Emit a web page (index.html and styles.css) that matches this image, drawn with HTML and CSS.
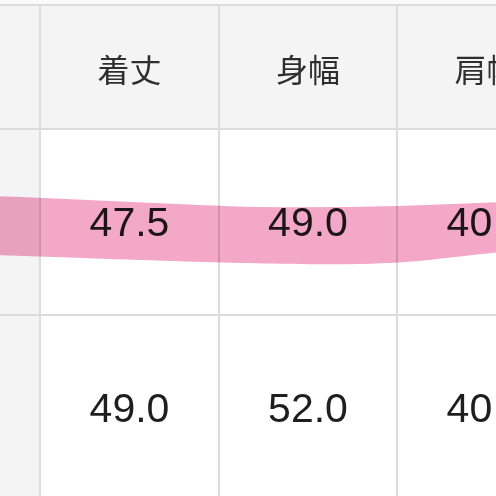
FILE: index.html
```html
<!DOCTYPE html>
<html lang="ja">
<head>
<meta charset="utf-8">
<link rel="stylesheet" href="styles.css">
</head>
<body>
<div class="page">
  <div class="chart">
    <div class="cell side"></div>
    <div class="cell head">着丈</div>
    <div class="cell head">身幅</div>
    <div class="cell head">肩幅</div>

    <div class="cell side"></div>
    <div class="cell num">47.5</div>
    <div class="cell num">49.0</div>
    <div class="cell num">40.0</div>

    <div class="cell side"></div>
    <div class="cell num">49.0</div>
    <div class="cell num">52.0</div>
    <div class="cell num">40.0</div>
  </div>
  <svg class="marker" width="496" height="496" viewBox="0 0 496 496" aria-hidden="true">
    <path d="M-6 196 C 80 199 180 205 260 207 C 340 208 420 206 502 202 L 502 252 C 450 257 420 263 360 264 C 280 265 200 262 -6 255 Z" fill="#f2a8c6"/>
  </svg>
</div>
</body>
</html>
```
FILE: styles.css
```css
html, body {
  margin: 0;
  padding: 0;
}
body {
  background: #fafafa;
  width: 496px;
  height: 496px;
  overflow: hidden;
}
.page {
  position: relative;
  width: 496px;
  height: 496px;
  overflow: hidden;
}
.chart {
  margin-top: 4px;
  border-top: 2px solid #dcdcdf;
  display: grid;
  grid-template-columns: 39px 177px 176px 177px;
  grid-template-rows: 122px 184px 184px;
  gap: 2px;
  background: #dcdcdf;
  width: 575px;
}
.cell {
  display: flex;
  align-items: center;
  justify-content: center;
  background: #ffffff;
  white-space: nowrap;
}
.side {
  background: #f4f4f4;
}
.head {
  background: #f4f4f4;
  font-family: "Noto Sans CJK JP", "Noto Sans", sans-serif;
  font-size: 32px;
  color: #2e2e2e;
  padding-top: 2px;
}
.num {
  font-family: "Liberation Sans", Arial, sans-serif;
  font-size: 41px;
  color: #1e1e1e;
}
.marker {
  position: absolute;
  left: 0;
  top: 0;
  mix-blend-mode: multiply;
  pointer-events: none;
  filter: blur(0.6px);
}
```
